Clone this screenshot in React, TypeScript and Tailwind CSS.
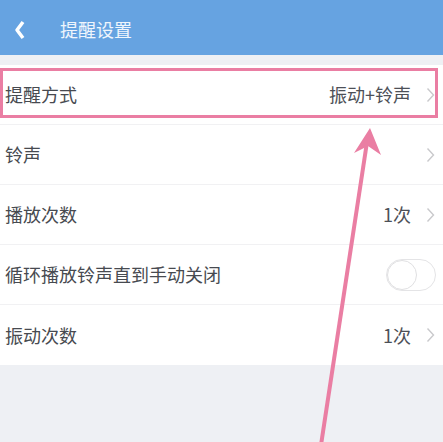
import React from 'react';

const font = { fontFamily: '"Noto Sans CJK SC", "Noto Sans", sans-serif' };

const Chevron = () => (
  <svg width="9" height="16" viewBox="0 0 9 16" className="shrink-0">
    <path d="M1.5 1.5 L7.5 8 L1.5 14.5" fill="none" stroke="#c9c9cc" strokeWidth="1.4" />
  </svg>
);

type Row = { label: string; value?: string; chevron?: boolean; toggle?: boolean };

const rows: Row[] = [
  { label: '提醒方式', value: '振动+铃声', chevron: true },
  { label: '铃声', chevron: true },
  { label: '播放次数', value: '1次', chevron: true },
  { label: '循环播放铃声直到手动关闭', toggle: true },
  { label: '振动次数', value: '1次', chevron: true },
];

export default function App() {
  return (
    <div className="relative w-[443px] h-[442px] overflow-hidden bg-[#eef0f4]" style={font}>
      <div className="h-[55px] pt-[4px] bg-[#66a3e1] flex items-center">
        <svg width="14" height="20" viewBox="0 0 14 20" className="ml-[13px]">
          <path d="M10 2 L4 10 L10 18" fill="none" stroke="#ffffff" strokeWidth="3.5" strokeLinejoin="round" />
        </svg>
        <span className="ml-[33px] text-[18px] text-white/90">提醒设置</span>
      </div>
      <div className="mt-[10px] bg-white">
        {rows.map((r, i) => (
          <div
            key={r.label}
            className={`h-[60px] flex items-center pl-[5px] pr-[8px] ${i < rows.length - 1 ? 'border-b border-[#f1f1f3]' : ''}`}
          >
            <span className="flex-1 text-[18px] text-[#474a50]">{r.label}</span>
            {r.value && <span className="text-[18px] text-[#4d5057] mr-[15px]">{r.value}</span>}
            {r.chevron && <Chevron />}
            {r.toggle && (
              <div className="w-[50px] h-[32px] mr-[-1px] rounded-full border border-[#e4e4e6] bg-white flex items-center">
                <div className="w-[30px] h-[30px] rounded-full border border-[#e0e0e2] bg-white" />
              </div>
            )}
          </div>
        ))}
      </div>
      <div className="absolute left-0 top-[68px] w-[438px] h-[50px] border-[3px] border-[#ea7ea3]" />
      <svg className="absolute left-0 top-0" width="443" height="442" viewBox="0 0 443 442">
        <line x1="321" y1="445" x2="367" y2="142" stroke="#ea7ea3" strokeWidth="4" />
        <path d="M370 128 L381 155 L368 146 L354 153 Z" fill="#ea7ea3" />
      </svg>
    </div>
  );
}
